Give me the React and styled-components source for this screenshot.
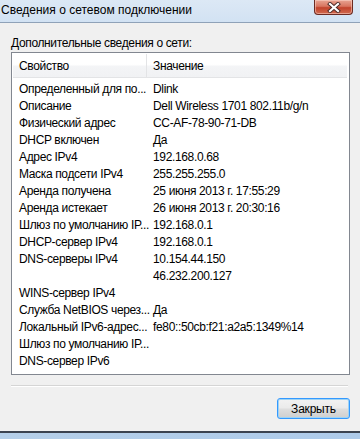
import React from 'react';
import styled, { createGlobalStyle } from 'styled-components';

const GlobalStyle = createGlobalStyle`
  html, body {
    margin: 0;
    padding: 0;
    background: #f0f0f0;
  }
  body {
    font-family: "Liberation Sans", Arial, sans-serif;
    font-size: 12px;
    letter-spacing: -0.35px;
    color: #000;
  }
`;

const rows = [
  ['Определенный для по...', 'Dlink'],
  ['Описание', 'Dell Wireless 1701 802.11b/g/n'],
  ['Физический адрес', 'CC-AF-78-90-71-DB'],
  ['DHCP включен', 'Да'],
  ['Адрес IPv4', '192.168.0.68'],
  ['Маска подсети IPv4', '255.255.255.0'],
  ['Аренда получена', '25 июня 2013 г. 17:55:29'],
  ['Аренда истекает', '26 июня 2013 г. 20:30:16'],
  ['Шлюз по умолчанию IP...', '192.168.0.1'],
  ['DHCP-сервер IPv4', '192.168.0.1'],
  ['DNS-серверы IPv4', '10.154.44.150'],
  ['', '46.232.200.127'],
  ['WINS-сервер IPv4', ''],
  ['Служба NetBIOS через...', 'Да'],
  ['Локальный IPv6-адрес...', 'fe80::50cb:f21:a2a5:1349%14'],
  ['Шлюз по умолчанию IP...', ''],
  ['DNS-сервер IPv6', ''],
];

function CloseIcon() {
  return (
    <svg width="14" height="11" viewBox="0 0 14 11">
      <path d="M3 2 L11 9 M11 2 L3 9" stroke="#4a2a28" strokeWidth="4" strokeLinecap="square" />
      <path d="M3 2 L11 9 M11 2 L3 9" stroke="#ffffff" strokeWidth="2.2" strokeLinecap="square" />
    </svg>
  );
}

export default function App() {
  return (
    <Window>
      <GlobalStyle />
      <TitleBar>
        <Title>Сведения о сетевом подключении</Title>
        <CloseButton><CloseIcon /></CloseButton>
      </TitleBar>
      <Content>
        <Label>Дополнительные сведения о сети:</Label>
        <ListBox>
          <HeaderRow>
            <HeaderCell $first>Свойство</HeaderCell>
            <HeaderCell>Значение</HeaderCell>
          </HeaderRow>
          <Rows>
            {rows.map(([name, value], i) => (
              <Row key={i}>
                <NameCell>{name}</NameCell>
                <ValueCell>{value}</ValueCell>
              </Row>
            ))}
          </Rows>
        </ListBox>
        <Separator />
        <Footer>
          <Button>Закрыть</Button>
        </Footer>
      </Content>
      <BottomFrame />
    </Window>
  );
}

const Window = styled.div`
  display: flex;
  flex-direction: column;
  width: 360px;
  height: 439px;
  overflow: hidden;
  background: #f0f0f0;
`;

const TitleBar = styled.div`
  display: flex;
  justify-content: space-between;
  align-items: flex-start;
  height: 22px;
  background: linear-gradient(to bottom, #dce8f5, #d2e2f3);
  border-bottom: 1px solid #8fa2b8;
`;

const Title = styled.div`
  padding: 3px 0 0 1px;
  font-size: 12px;
  line-height: 14px;
  letter-spacing: 0;
  color: #000;
`;

const CloseButton = styled.div`
  display: flex;
  align-items: center;
  justify-content: center;
  width: 37px;
  height: 14px;
  margin-right: 7px;
  border: 1px solid #6b2a22;
  border-top: none;
  border-radius: 0 0 4px 4px;
  background: linear-gradient(to bottom, #e8a493 0%, #d87560 45%, #c2432c 55%, #d06a4f 100%);
  box-shadow: inset 0 0 0 1px rgba(255, 220, 210, 0.5);
`;

const Content = styled.div`
  flex: 1;
  display: flex;
  flex-direction: column;
  padding: 13px 10px 0 11px;
`;

const Label = styled.div`
  height: 16px;
  line-height: 15px;
`;

const ListBox = styled.div`
  display: flex;
  flex-direction: column;
  height: 320px;
  background: #fff;
  border: 1px solid #828790;
  padding: 1px 2px 0 1px;
`;

const HeaderRow = styled.div`
  display: flex;
  height: 23px;
  background: linear-gradient(to bottom, #ffffff 0%, #ffffff 45%, #f3f4f6 55%, #f1f2f4 100%);
  border-bottom: 1px solid #e3e4e6;
`;

const HeaderCell = styled.div`
  display: flex;
  align-items: center;
  width: ${p => (p.$first ? '134px' : 'auto')};
  flex: ${p => (p.$first ? 'none' : '1')};
  padding-left: 6px;
  box-sizing: border-box;
  border-right: ${p => (p.$first ? '1px solid #e3e4e6' : 'none')};
  padding-top: 1px;
`;

const Rows = styled.div`
  display: flex;
  flex-direction: column;
  padding-top: 2px;
`;

const Row = styled.div`
  display: flex;
  height: 17px;
  align-items: center;
`;

const NameCell = styled.div`
  width: 134px;
  padding-left: 6px;
  box-sizing: border-box;
  white-space: nowrap;
`;

const ValueCell = styled.div`
  flex: 1;
  padding-left: 6px;
  white-space: nowrap;
`;

const Separator = styled.div`
  margin-top: 10px;
  height: 1px;
  background: #d5d5d5;
  border-bottom: 1px solid #ffffff;
  margin-right: 2px;
`;

const Footer = styled.div`
  display: flex;
  justify-content: flex-end;
  margin-top: 11px;
`;

const Button = styled.button`
  width: 73px;
  height: 21px;
  padding: 0;
  font-family: "Liberation Sans", Arial, sans-serif;
  font-size: 12px;
  letter-spacing: -0.2px;
  color: #000;
  border: 1px solid #3399ff;
  border-radius: 3px;
  background: linear-gradient(to bottom, #f2f2f2 0%, #ebebeb 45%, #dddddd 55%, #cfcfcf 100%);
  box-shadow: inset 0 0 0 1px #9ed3f5;
`;

const BottomFrame = styled.div`
  height: 6px;
  border-top: 2px solid #3b4350;
  background: linear-gradient(to right, #b5cfe9, #aecbea);
`;
